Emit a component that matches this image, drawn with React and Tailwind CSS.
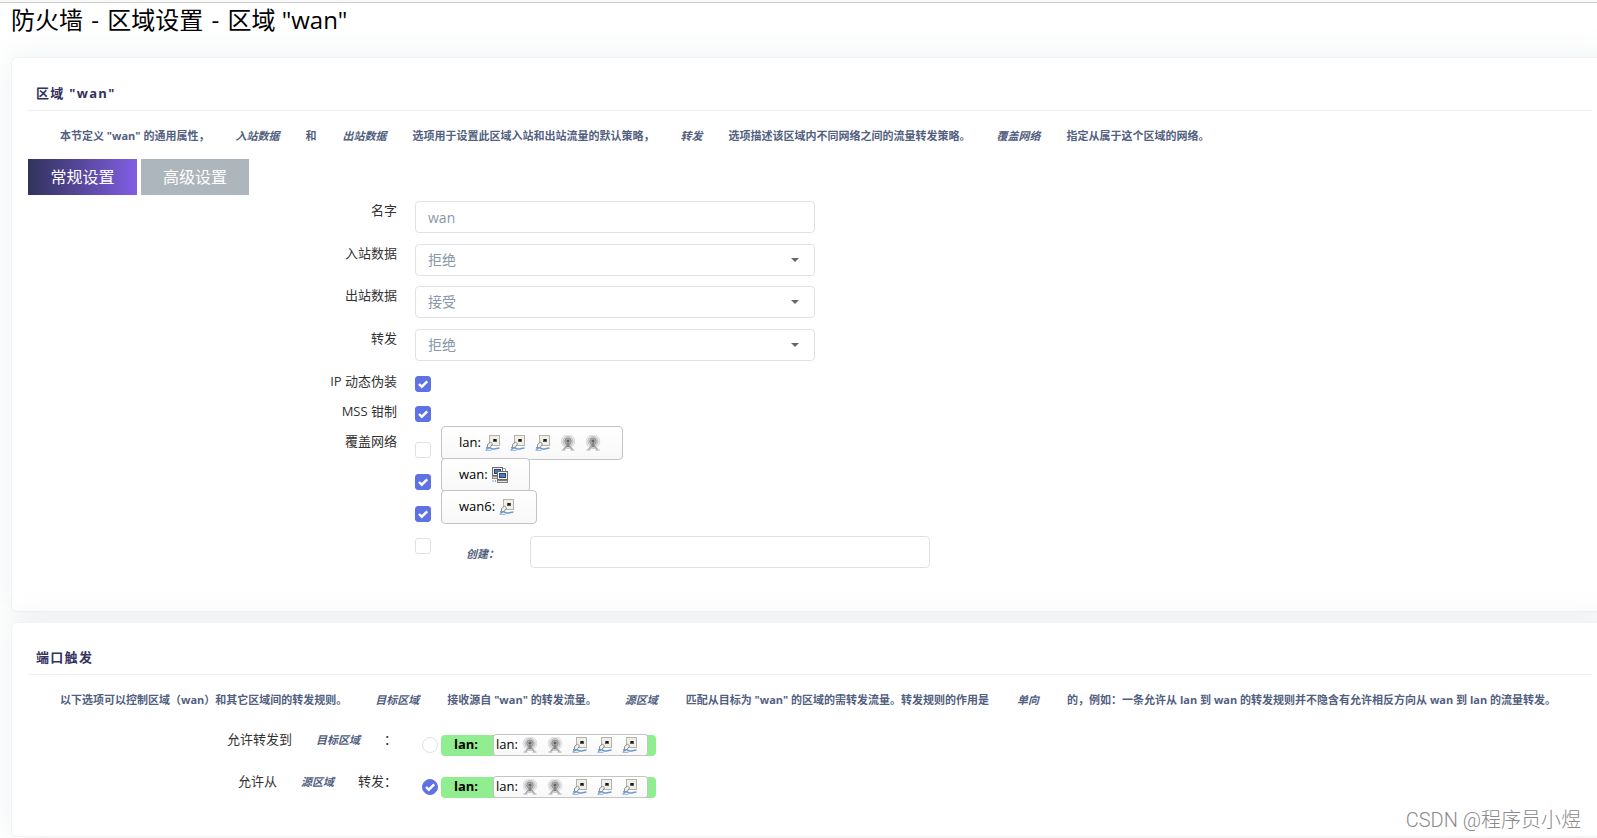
import { useState } from "react";

const POLICIES = ["拒绝", "接受", "丢弃"];

const NETWORKS = [
  { name: "lan", icons: ["eth", "eth", "eth", "wifi", "wifi"], checked: false },
  { name: "wan", icons: ["pc"], checked: true },
  { name: "wan6", icons: ["eth"], checked: true },
];

const ZONE_ICONS = ["wifi", "wifi", "eth", "eth", "eth"];

function EthernetIcon() {
  return (
    <svg className="w-4 h-4 shrink-0" viewBox="0 0 16 16" fill="none">
      <rect x="4.5" y="0.5" width="10" height="10" fill="#efeee8" stroke="#b3b3ab" />
      <path d="M8 4h4v3H8z" fill="#8d8a5c" />
      <path d="M8 4h1v3H8zM11 4h1v3h-1zM9 6h2v1H9z" fill="#5d5c50" />
      <path d="M9 4h2v2H9z" fill="#17172a" />
      <path d="M2.5 9.500 5.500 7l2 2-2.500 3.500h-2.500z" fill="#f1f1ef" stroke="#8d8d88" />
      <path d="M1 12.500h3" stroke="#9a9a96" />
      <path d="M1 14.500c2-1.500 3.500-2 4.500-1.500s1.500 1.500 4 1 3-1 5-1" stroke="#6d9ace" strokeWidth="1.500" />
      <path d="M0.500 15.300h6" stroke="#8db0d8" />
    </svg>
  );
}

function WifiIcon() {
  return (
    <svg className="w-4 h-4 shrink-0" viewBox="0 0 16 16" fill="none">
      <circle cx="8" cy="6.500" r="7" fill="#eeeeee" />
      <circle cx="8" cy="6.500" r="6.800" stroke="#d9d9d9" strokeWidth="0.800" />
      <circle cx="8" cy="6.500" r="5" fill="#d6d6d6" stroke="#bdbdbd" />
      <circle cx="8" cy="6.300" r="3.200" fill="#b4b4b4" stroke="#8e8e8e" />
      <circle cx="8" cy="6" r="1.600" fill="#636363" />
      <path d="M7 8h2l1 4H6z" fill="#858585" />
      <path d="M6.500 11 3.500 14.500M9.500 11l3 3.500" stroke="#a2a2a2" strokeWidth="1.200" />
      <path d="M4.500 13h7" stroke="#b0b0b0" />
      <path d="M1.500 15h4M10.500 15h4" stroke="#a9a9a9" />
    </svg>
  );
}

function ComputersIcon() {
  return (
    <svg className="w-4 h-4 shrink-0" viewBox="0 0 16 16" fill="none">
      <path d="M11 1.500h2.500V4" stroke="#7ea3d0" />
      <rect x="0.500" y="0.500" width="10" height="8" fill="#efefe9" stroke="#6b6b6b" />
      <rect x="2.500" y="2.500" width="6" height="4" fill="#4b7cbf" stroke="#27456f" />
      <rect x="0.500" y="9.500" width="6" height="2" fill="#dcdcd6" stroke="#8a8a8a" />
      <rect x="5.500" y="4.500" width="10" height="8" fill="#f4f4ef" stroke="#6b6b6b" />
      <rect x="7.500" y="6.500" width="6" height="4" fill="#4b7cbf" stroke="#27456f" />
      <rect x="5.500" y="13.500" width="10" height="2" fill="#e2e2dc" stroke="#7d7d7d" />
      <path d="M0.500 14h1M3 14h1" stroke="#7ea3d0" strokeWidth="2" />
    </svg>
  );
}

const ICONS = { eth: EthernetIcon, wifi: WifiIcon, pc: ComputersIcon };

function IconRow({ icons }) {
  return (
    <span className="flex items-center gap-[9px]">
      {icons.map((key, i) => {
        const Icon = ICONS[key];
        return <Icon key={i} />;
      })}
    </span>
  );
}

function Check({ type = "checkbox", ...props }) {
  return (
    <span className="inline-grid w-4 h-4 shrink-0">
      <input
        type={type}
        className={`peer col-start-1 row-start-1 appearance-none w-4 h-4 bg-white border border-[#dee2e6] checked:bg-[#5e72e4] checked:border-[#5e72e4] ${
          type === "radio" ? "rounded-full" : "rounded-[3px]"
        }`}
        {...props}
      />
      <svg
        className="col-start-1 row-start-1 w-4 h-4 pointer-events-none invisible peer-checked:visible"
        viewBox="0 0 16 16"
        fill="none"
      >
        <path d="M4 8 6.800 10.700 12.200 5.300" stroke="#fff" strokeWidth="2.400" />
      </svg>
    </span>
  );
}

function Term({ className = "mx-6", children }) {
  return (
    <em className={`text-[11px] font-bold italic text-[#525f7f] ${className}`}>{children}</em>
  );
}

function Section({ title, intro, className = "", children }) {
  return (
    <section
      className={`bg-white border border-black/5 rounded-md shadow-[0_0_32px_0_rgba(136,152,170,0.15)] ${className}`}
    >
      <h3 className="pl-2 pb-[7px] border-b border-[#eef0f2] text-[13px] leading-5 font-bold tracking-widest text-[#32325d]">
        {title}
      </h3>
      <p className="mt-[15px] px-8 text-[11px] leading-5 font-bold text-[#525f7f]">{intro}</p>
      {children}
    </section>
  );
}

function Row({ label, htmlFor, className = "", labelClass = "", children }) {
  return (
    <div className={`flex items-start gap-[18px] ${className}`}>
      <label
        htmlFor={htmlFor}
        className={`w-[369px] shrink-0 text-right text-[13px] leading-[18px] text-[#333] ${labelClass}`}
      >
        {label}
      </label>
      {children}
    </div>
  );
}

function PolicySelect({ id, value }) {
  return (
    <span className="grid items-center w-[400px]">
      <select
        id={id}
        defaultValue={value}
        className="col-start-1 row-start-1 appearance-none w-full h-8 px-3 bg-white border border-[#dee2e6] rounded text-sm text-[#8898aa]"
      >
        {POLICIES.map((p) => (
          <option key={p}>{p}</option>
        ))}
      </select>
      <svg
        className="col-start-1 row-start-1 justify-self-end mr-4 w-2 h-1 pointer-events-none"
        viewBox="0 0 8 4"
      >
        <path d="M0 0h8L4 4z" fill="#666" />
      </svg>
    </span>
  );
}

function ZoneBadge() {
  return (
    <span className="flex items-center h-[21px] rounded bg-[#90ee90] text-[13px] text-black">
      <strong className="w-[52px] pl-[13px]">lan:</strong>
      <span className="flex items-center gap-1 h-[22px] pl-[2px] pr-[9px] mr-2 border border-[#c4c4c4] rounded-[3px] bg-linear-to-b from-white to-[#f8f8f8]">
        lan:
        <IconRow icons={ZONE_ICONS} />
      </span>
    </span>
  );
}

export default function App() {
  const [tab, setTab] = useState("general");

  const tabClass = (id) =>
    tab === id
      ? "bg-linear-to-r from-[#32325d] to-[#825ee4]"
      : "bg-[#adb5bd]";

  return (
    <div className="relative min-h-screen overflow-hidden bg-white font-['Open_Sans','Noto_Sans_CJK_SC',sans-serif]">
      <div className="h-[3px] bg-[#fafafa] border-b border-[#cccccc]" />
      <main className="pl-[11px]">
        <h1 className="text-2xl leading-[34px] mb-5 text-black">
          防火墙 <span className="mx-[2px]">-</span> 区域设置 <span className="mx-[2px]">-</span> 区域 "wan"
        </h1>

        <Section
          title={'区域 "wan"'}
          className="-mr-3 px-4 pt-[25px] pb-[43px] mb-[10px]"
          intro={
            <>
              本节定义 "wan" 的通用属性，<Term className="mx-[26px]">入站数据</Term>和
              <Term className="mx-[26px]">出站数据</Term>
              选项用于设置此区域入站和出站流量的默认策略，<Term className="mx-[26px]">转发</Term>
              选项描述该区域内不同网络之间的流量转发策略。<Term className="mx-[26px]">覆盖网络</Term>
              指定从属于这个区域的网络。
            </>
          }
        >
          <div className="flex gap-1 mt-[13px] mb-[6px]">
            <button
              onClick={() => setTab("general")}
              className={`h-9 min-w-[109px] px-[22px] text-base text-white ${tabClass("general")}`}
            >
              常规设置
            </button>
            <button
              onClick={() => setTab("advanced")}
              className={`h-9 px-[22px] text-base text-white ${tabClass("advanced")}`}
            >
              高级设置
            </button>
          </div>

          <Row label="名字" htmlFor="name" className="mb-[11px]">
            <input
              id="name"
              defaultValue="wan"
              className="w-[400px] h-8 px-3 border border-[#dee2e6] rounded text-sm text-[#8898aa]"
            />
          </Row>
          <Row label="入站数据" htmlFor="input" className="mb-[10px]">
            <PolicySelect id="input" value="拒绝" />
          </Row>
          <Row label="出站数据" htmlFor="output" className="mb-[11px]">
            <PolicySelect id="output" value="接受" />
          </Row>
          <Row label="转发" htmlFor="forward" className="mb-[11px]">
            <PolicySelect id="forward" value="拒绝" />
          </Row>
          <Row label="IP 动态伪装" htmlFor="masq" className="mb-[10px]">
            <span className="flex items-end h-5">
              <Check id="masq" defaultChecked />
            </span>
          </Row>
          <Row label="MSS 钳制" htmlFor="mtu_fix" className="mb-1">
            <span className="flex items-end h-5">
              <Check id="mtu_fix" defaultChecked />
            </span>
          </Row>
          <Row label="覆盖网络" htmlFor="net-lan" labelClass="pt-[6px]">
            <ul>
              {NETWORKS.map((net) => (
                <li key={net.name} className="flex items-start gap-[10px] h-8">
                  <span className="flex mt-4">
                    <Check id={`net-${net.name}`} defaultChecked={net.checked} />
                  </span>
                  <label
                    htmlFor={`net-${net.name}`}
                    className="flex items-center gap-1 h-[34px] pl-[17px] pr-[21px] border border-[#c4c4c4] rounded bg-linear-to-b from-white to-[#f8f8f8] text-[13px] text-black"
                  >
                    {net.name}:
                    <IconRow icons={net.icons} />
                  </label>
                </li>
              ))}
              <li className="flex items-start">
                <span className="flex mt-4">
                  <Check id="net-new" aria-label="创建" />
                </span>
                <label
                  htmlFor="net-new-name"
                  className="w-[99px] pl-[35px] mt-[22px] text-[11px] leading-5 font-bold italic text-[#525f7f]"
                >
                  创建：
                </label>
                <input
                  id="net-new-name"
                  className="w-[400px] h-8 mt-[14px] px-3 border border-[#dee2e6] rounded text-sm text-[#8898aa]"
                />
              </li>
            </ul>
          </Row>
        </Section>

        <Section
          title="端口触发"
          className="-mr-3 px-4 pt-6 pb-[38px]"
          intro={
            <>
              以下选项可以控制区域（wan）和其它区域间的转发规则。<Term className="mx-7">目标区域</Term>
              接收源自 "wan" 的转发流量。<Term className="mx-7">源区域</Term>
              匹配从目标为 "wan" 的区域的需转发流量。转发规则的作用是<Term className="mx-7">单向</Term>
              的，例如：一条允许从 lan 到 wan 的转发规则并不隐含有允许相反方向从 wan 到 lan 的流量转发。
            </>
          }
        >
          <Row
            label={<>允许转发到<Term>目标区域</Term>：</>}
            htmlFor="fwd-to"
            className="mt-5 mb-4"
          >
            <span className="flex items-center gap-[3px] h-[26px] pl-[7px] pt-1">
              <Check type="radio" id="fwd-to" name="fwd-to" />
              <ZoneBadge />
            </span>
          </Row>
          <Row label={<>允许从<Term>源区域</Term>转发：</>} htmlFor="fwd-from">
            <span className="flex items-center gap-[3px] h-[26px] pl-[7px] pt-1">
              <Check type="radio" id="fwd-from" name="fwd-from" defaultChecked />
              <ZoneBadge />
            </span>
          </Row>
        </Section>
      </main>

      <span className="absolute right-4 bottom-1 text-xl leading-7 text-[#8a8a8a] font-['Roboto','Noto_Sans_CJK_SC',sans-serif] font-light">
        CSDN @程序员小煜
      </span>
    </div>
  );
}
